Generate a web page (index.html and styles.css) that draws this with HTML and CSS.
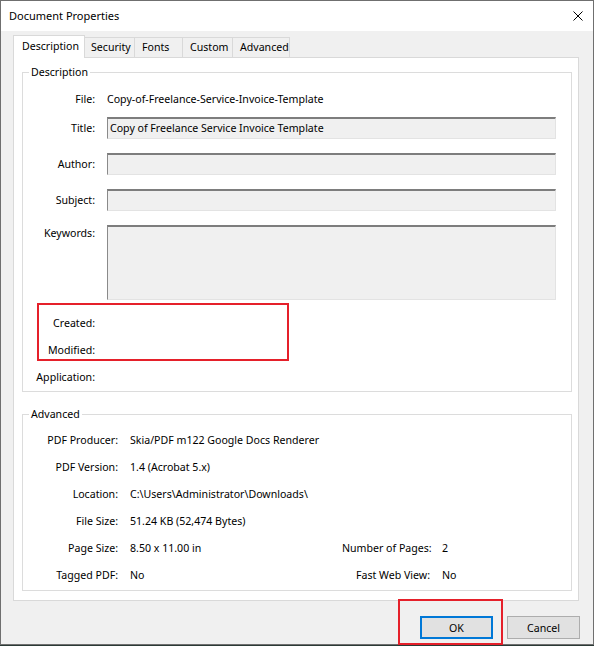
FILE: index.html
```html
<!DOCTYPE html>
<html lang="en">
  <head>
    <meta charset="UTF-8" />
    <meta name="viewport" content="width=device-width, initial-scale=1" />
    <title>Document Properties</title>
    <link rel="stylesheet" href="styles.css">
  </head>
  <body>
    <div class="window">
      <div class="titlebar">
        <span class="title">Document Properties</span>
        <button class="close" aria-label="Close">
          <svg width="10" height="10" viewBox="0 0 10 10">
            <path d="M0.5 0.5 L9.5 9.5 M9.5 0.5 L0.5 9.5" stroke="#000" stroke-width="1" fill="none" />
          </svg>
        </button>
      </div>

      <div class="tabs">
        <div class="tab tab-active tab-description">Description</div>
        <div class="tab tab-security">Security</div>
        <div class="tab tab-fonts">Fonts</div>
        <div class="tab tab-custom">Custom</div>
        <div class="tab tab-advanced">Advanced</div>
      </div>

      <div class="panel">
        <fieldset class="group group-description">
          <legend>Description</legend>
          <div class="row row-file">
            <span class="label">File:</span>
            <span class="value">Copy-of-Freelance-Service-Invoice-Template</span>
          </div>
          <div class="row row-field">
            <span class="label">Title:</span>
            <div class="textbox">Copy of Freelance Service Invoice Template</div>
          </div>
          <div class="row row-field">
            <span class="label">Author:</span>
            <div class="textbox"></div>
          </div>
          <div class="row row-field">
            <span class="label">Subject:</span>
            <div class="textbox"></div>
          </div>
          <div class="row row-field row-keywords">
            <span class="label">Keywords:</span>
            <div class="textbox textbox-tall"></div>
          </div>
          <div class="row row-text row-created">
            <span class="label">Created:</span>
            <span class="value"></span>
          </div>
          <div class="row row-text">
            <span class="label">Modified:</span>
            <span class="value"></span>
          </div>
          <div class="row row-text">
            <span class="label">Application:</span>
            <span class="value"></span>
          </div>
        </fieldset>

        <fieldset class="group group-advanced">
          <legend>Advanced</legend>
          <div class="adv-grid">
            <span class="label">PDF Producer:</span>
            <span class="value span-3">Skia/PDF m122 Google Docs Renderer</span>

            <span class="label">PDF Version:</span>
            <span class="value span-3">1.4 (Acrobat 5.x)</span>

            <span class="label">Location:</span>
            <span class="value span-3">C:\Users\Administrator\Downloads\</span>

            <span class="label">File Size:</span>
            <span class="value span-3">51.24 KB (52,474 Bytes)</span>

            <span class="label">Page Size:</span>
            <span class="value">8.50 x 11.00 in</span>
            <span class="label">Number of Pages:</span>
            <span class="value">2</span>

            <span class="label">Tagged PDF:</span>
            <span class="value">No</span>
            <span class="label">Fast Web View:</span>
            <span class="value">No</span>
          </div>
        </fieldset>
      </div>

      <div class="buttons">
        <button class="btn btn-default">OK</button>
        <button class="btn">Cancel</button>
      </div>

      <!-- red annotation boxes drawn over the dialog -->
      <div class="mark mark-dates"></div>
      <div class="mark mark-ok"></div>
    </div>
  </body>
</html>
```

FILE: styles.css
```css
body {
  margin: 0;
  padding: 0;
  background-color: #2b3a36;
  font-family: "Noto Sans", "Open Sans", Arial, sans-serif;
  font-size: 10.6px;
  color: #000;
}

.window {
  position: relative;
  box-sizing: border-box;
  width: 594px;
  height: 645px;
  background-color: #f0f0f0;
  border: 1px solid #6f6f6f;
}

.titlebar {
  display: flex;
  justify-content: space-between;
  align-items: center;
  height: 30px;
  background-color: #fff;
}

.title {
  padding-left: 8px;
  font-size: 11px;
  line-height: 16px;
}

.close {
  display: flex;
  justify-content: center;
  align-items: center;
  width: 30px;
  height: 30px;
  padding: 0;
  border: none;
  background: none;
}

/* tab strip */
.tabs {
  display: flex;
  align-items: flex-end;
  height: 23px;
  margin-top: 4px;
  padding-left: 12px;
}

.tab {
  box-sizing: border-box;
  height: 20px;
  margin-bottom: 1px;
  margin-left: -1px;
  padding-left: 6px;
  line-height: 19px;
  white-space: nowrap;
  border: 1px solid #d9d9d9;
  border-bottom: none;
  background-color: #f0f0f0;
}

.tab-active {
  position: relative;
  z-index: 1;
  height: 23px;
  margin-bottom: 0;
  margin-left: 0;
  padding-left: 8px;
  line-height: 21px;
  background-color: #fff;
}

.tab-description { width: 72px; }
.tab-security { width: 51px; }
.tab-fonts { width: 49px; padding-left: 7px; }
.tab-custom { width: 51px; padding-left: 7px; }
.tab-advanced { width: 58px; padding-left: 7px; }

.panel {
  margin: -1px 14px 0 12px;
  background-color: #fff;
  border: 1px solid #d9d9d9;
}

/* group boxes */
.group {
  margin: 6px 6px 9px 8px;
  padding: 0 15px 1px 0;
  border: 1px solid #dcdcdc;
  min-width: 0;
}

.group legend {
  margin-left: 6px;
  padding: 0 2px;
  line-height: 16px;
}

.group-description {
  position: relative;
  padding-top: 7px;
}

.group-advanced {
  margin-top: 14px;
  padding-top: 4px;
  padding-bottom: 2px;
}

.row {
  display: flex;
  align-items: center;
  gap: 12px;
}

.label {
  flex: none;
  width: 72px;
  text-align: right;
  white-space: nowrap;
}

.value {
  white-space: nowrap;
}

.row-file {
  height: 23px;
}

.row-field {
  height: 22px;
  margin-top: 14px;
}

.row-file + .row-field {
  margin-top: 7px;
}

.row-keywords {
  align-items: flex-start;
  height: 75px;
}

.row-keywords .label {
  line-height: 16px;
}

.row-text {
  height: 27px;
}

.row-created {
  margin-top: 9px;
}

.textbox {
  box-sizing: border-box;
  flex: 1;
  height: 100%;
  padding-left: 2px;
  line-height: 18px;
  background-color: #f0f0f0;
  border-top: 2px solid #7d7d7d;
  border-left: 1px solid #8a8a8a;
  border-right: 1px solid #e3e3e3;
  border-bottom: 1px solid #e3e3e3;
  white-space: nowrap;
  overflow: hidden;
}

.adv-grid {
  display: grid;
  grid-template-columns: 95px 200px 88px 1fr;
  grid-auto-rows: 27px;
  column-gap: 12px;
  align-items: center;
}

.adv-grid .label {
  width: auto;
}

.span-3 {
  grid-column: span 3;
}

/* bottom buttons */
.buttons {
  display: flex;
  justify-content: flex-end;
  gap: 14px;
  margin-top: 15px;
  padding-right: 13px;
}

.btn {
  box-sizing: border-box;
  width: 73px;
  height: 23px;
  padding: 0;
  font-family: inherit;
  font-size: 10.6px;
  color: #000;
  background-color: #e1e1e1;
  border: 1px solid #adadad;
}

.btn-default {
  border: 2px solid #0078d7;
}

/* annotation overlays */
.mark {
  position: absolute;
  box-sizing: border-box;
  border: 2px solid #e5202a;
}

.mark-dates {
  left: 36px;
  top: 302px;
  width: 252px;
  height: 58px;
}

.mark-ok {
  left: 397px;
  top: 598px;
  width: 105px;
  height: 46px;
}
```
